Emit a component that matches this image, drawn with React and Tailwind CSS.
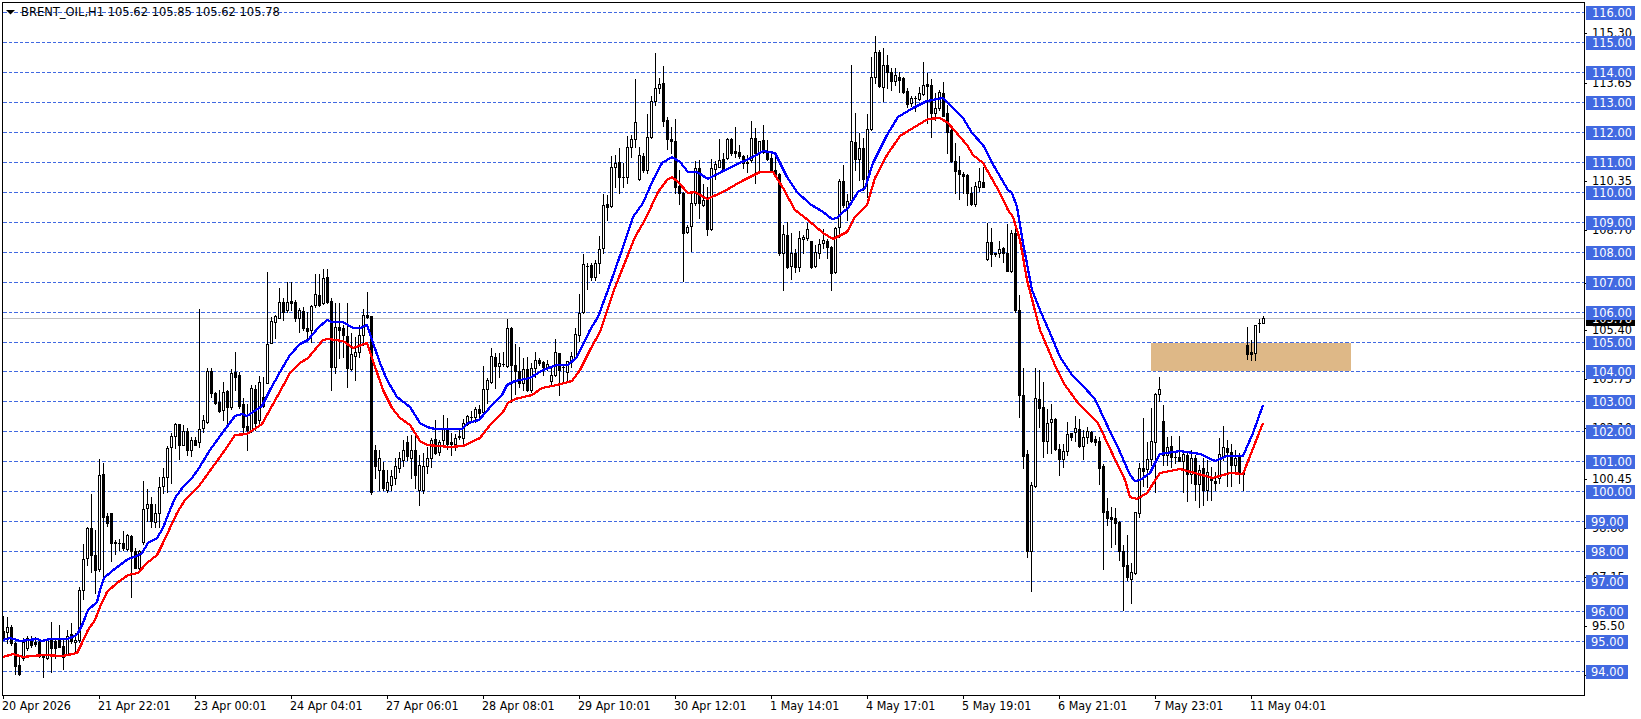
import React from "react";

// x, body top, body bottom, high, low, 1 = black candle (page pixels)
const candles = [
  [3,631,640,616,640,1],[7,627,632,617,643,0],[11,627,643,625,645,1],[15,643,666,642,674,1],[19,665,674,655,675,1],
  [23,642,658,638,660,0],[27,638,648,636,650,0],[31,640,645,636,647,1],[35,642,644,637,646,1],[39,642,656,640,657,1],
  [43,654,657,654,677,1],[47,640,658,639,659,0],[51,639,648,622,672,1],[55,641,648,638,658,1],[59,640,647,625,647,1],
  [63,646,657,638,669,1],[67,636,654,630,655,0],[71,634,641,623,643,1],[75,640,642,633,653,0],[79,590,640,587,642,0],
  [83,559,590,544,599,0],[87,528,558,527,565,0],[91,528,555,494,572,1],[95,555,570,530,593,1],[99,475,569,459,571,0],
  [103,474,517,463,578,1],[107,516,523,513,526,1],[111,513,543,513,561,1],[115,542,543,540,554,0],[119,543,543,539,550,0],
  [123,543,548,531,550,1],[127,535,549,534,550,0],[131,536,551,535,597,1],[135,551,568,548,568,1],[139,551,568,550,569,0],
  [143,509,542,481,544,0],[147,504,508,489,521,0],[151,504,521,497,527,1],[155,513,522,504,527,0],[159,487,513,477,527,0],
  [163,477,486,468,493,0],[167,448,477,446,492,0],[171,436,447,433,483,0],[175,424,436,423,448,0],[179,424,445,424,459,1],
  [183,431,445,425,445,0],[187,431,450,428,455,1],[191,440,450,437,456,0],[195,440,445,437,445,1],[199,429,442,309,447,0],
  [203,420,428,415,432,0],[207,371,422,368,423,0],[211,371,393,368,397,1],[215,393,403,392,404,1],[219,402,411,390,412,1],
  [223,392,410,382,420,0],[227,391,407,390,425,1],[231,373,407,369,409,0],[235,372,377,352,390,1],[239,375,406,372,408,1],
  [243,404,427,398,432,1],[247,426,430,404,450,1],[251,388,430,385,432,0],[255,389,423,385,430,1],[259,382,420,376,423,0],
  [263,397,406,377,407,1],[267,344,383,272,383,0],[271,321,343,317,343,0],[275,316,322,315,338,0],[279,302,318,288,318,0],
  [283,302,312,298,320,1],[287,302,310,282,312,0],[291,301,303,282,310,1],[295,302,318,300,321,1],[299,310,318,308,332,0],
  [303,311,328,307,330,1],[307,328,331,312,340,1],[311,306,330,305,342,0],[315,294,305,274,307,0],[319,295,305,274,306,1],
  [323,278,303,269,304,0],[327,277,302,269,303,1],[331,301,367,298,390,1],[335,327,367,303,373,0],[339,327,330,303,358,1],
  [343,328,335,325,357,1],[347,336,368,303,387,1],[351,354,369,333,370,0],[355,352,356,337,380,0],[359,335,352,325,357,0],
  [363,315,335,309,345,0],[367,315,317,292,318,1],[371,316,492,316,494,1],[375,450,466,445,478,1],[379,458,470,450,490,0],
  [383,470,488,462,490,1],[387,482,490,470,492,0],[391,476,485,470,490,0],[395,466,478,458,484,0],[399,458,468,452,472,0],
  [403,450,460,440,466,0],[407,442,456,436,460,1],[411,450,458,435,478,0],[415,450,475,432,488,1],[419,465,490,455,505,0],
  [423,466,490,453,493,0],[427,458,466,447,473,0],[431,440,458,438,467,0],[435,439,453,420,454,1],[439,442,452,440,455,0],
  [443,429,440,415,445,0],[447,430,444,418,449,1],[451,442,444,433,455,1],[455,438,444,434,450,0],[459,436,437,430,439,1],
  [463,423,438,419,444,0],[467,416,424,415,425,0],[471,417,417,411,420,0],[475,409,417,407,422,0],[479,409,413,405,417,1],
  [483,389,412,366,413,0],[487,380,389,378,403,0],[491,356,382,348,383,0],[495,357,366,353,388,1],[499,363,366,353,377,0],
  [503,364,364,352,366,0],[507,328,366,319,367,0],[511,328,365,327,402,1],[515,365,371,344,394,1],[519,371,383,347,387,1],
  [523,369,383,358,390,0],[527,369,390,357,391,1],[531,368,390,363,392,0],[535,360,368,352,377,0],[539,360,363,358,365,1],
  [543,362,367,361,375,1],[547,364,367,360,370,0],[551,375,381,366,385,0],[555,352,375,339,376,0],[559,353,370,353,395,1],
  [563,367,367,365,383,0],[567,361,372,361,382,0],[571,356,362,352,367,0],[575,334,357,328,358,0],[579,313,335,294,341,0],
  [583,264,312,254,313,0],[587,266,266,263,289,0],[591,265,277,263,280,1],[595,263,277,260,280,0],[599,249,263,236,273,0],
  [603,205,248,194,253,0],[607,204,207,195,220,1],[611,167,206,156,207,0],[615,163,167,155,187,0],[619,162,177,148,193,1],
  [623,177,177,163,187,0],[627,147,177,136,183,0],[631,139,147,135,157,0],[635,122,139,79,147,0],[639,155,179,147,180,0],
  [643,156,170,153,172,1],[647,137,170,114,173,0],[651,101,137,96,138,0],[655,88,101,53,105,0],[659,84,88,78,93,0],
  [663,83,121,66,126,1],[667,120,139,117,149,1],[671,139,141,127,153,1],[675,141,187,119,193,1],[679,186,193,170,204,1],
  [683,193,233,192,281,1],[687,227,232,225,233,0],[691,203,226,193,251,0],[695,168,203,161,205,0],[699,168,203,160,218,1],
  [703,200,205,184,206,0],[707,200,229,187,235,1],[711,168,229,159,230,0],[715,164,169,161,179,0],[719,160,167,139,167,0],
  [723,159,170,153,171,1],[727,139,158,138,159,0],[731,139,153,138,155,1],[735,151,153,127,157,1],[739,152,156,145,158,1],
  [743,156,163,155,168,1],[747,162,163,155,172,1],[751,138,160,121,162,0],[755,138,153,128,183,1],[759,141,152,141,172,0],
  [763,140,152,125,153,1],[767,152,159,140,160,1],[771,158,171,153,172,1],[775,170,175,152,177,1],[779,174,253,173,255,1],
  [783,234,253,225,290,0],[787,235,267,222,268,1],[791,253,266,233,279,0],[795,253,267,249,272,1],[799,238,267,231,271,0],
  [803,237,239,235,253,0],[807,229,238,223,240,0],[811,241,267,241,268,1],[815,252,266,245,267,0],[819,244,253,239,258,0],
  [823,240,243,229,248,0],[827,241,247,239,258,1],[831,247,273,246,290,1],[835,228,272,227,273,0],[839,181,227,179,237,0],
  [843,181,205,165,207,1],[847,201,208,194,220,0],[851,141,200,65,201,0],[855,142,159,113,170,1],[859,148,159,133,180,0],
  [863,148,179,138,190,1],[867,129,178,114,197,0],[871,77,129,57,130,0],[875,52,77,36,83,0],[879,52,86,50,87,1],
  [883,65,87,48,101,0],[887,65,72,55,88,1],[891,72,81,68,90,1],[895,75,81,68,85,0],[899,77,80,72,92,1],
  [903,78,92,77,93,1],[907,91,104,88,107,1],[911,98,103,96,106,0],[915,98,98,96,111,0],[919,93,99,87,100,0],
  [923,85,94,62,95,0],[927,84,86,73,123,1],[931,85,113,79,137,1],[935,108,113,93,120,0],[939,92,108,90,110,0],
  [943,93,116,82,116,1],[947,113,132,105,153,1],[951,130,161,129,162,1],[955,161,171,143,193,1],[959,170,174,156,199,1],
  [963,174,176,172,193,1],[967,175,193,174,205,1],[971,193,204,187,205,1],[975,186,204,182,206,0],[979,181,187,168,191,0],
  [983,182,187,167,187,1],[987,242,259,223,260,0],[991,242,254,228,266,1],[995,253,254,253,256,1],[999,249,253,241,257,0],
  [1003,248,253,247,262,1],[1007,253,271,224,271,1],[1011,233,271,230,272,0],[1015,233,310,222,312,1],[1019,310,395,295,417,1],
  [1023,395,456,368,468,1],[1027,454,551,450,557,1],[1031,485,551,482,591,0],[1035,398,486,368,487,0],[1039,399,408,370,427,1],
  [1043,407,441,382,457,1],[1047,423,441,409,453,0],[1051,419,422,404,453,0],[1055,419,449,418,450,1],[1059,449,459,444,475,1],
  [1063,451,459,444,467,0],[1067,434,451,422,455,0],[1071,433,437,433,440,1],[1075,428,432,416,441,0],[1079,429,446,419,447,1],
  [1083,437,446,430,459,0],[1087,431,437,427,443,0],[1091,432,441,431,442,1],[1095,439,442,436,445,1],[1099,441,468,437,484,1],
  [1103,466,512,464,569,1],[1107,511,518,498,525,1],[1111,517,519,507,547,1],[1115,518,523,508,544,1],[1119,522,551,521,560,1],
  [1123,551,566,545,610,1],[1127,565,577,535,580,1],[1131,572,579,563,603,0],[1135,512,573,512,574,0],[1139,468,513,463,517,0],
  [1143,468,471,418,486,1],[1147,459,469,442,487,0],[1151,441,459,408,465,0],[1155,394,442,393,492,0],[1159,389,394,377,401,0],
  [1163,421,455,405,465,1],[1167,447,455,437,465,0],[1171,446,457,436,467,1],[1175,457,457,453,463,0],[1179,457,461,436,461,1],
  [1183,454,461,450,492,0],[1187,455,474,453,501,1],[1191,458,474,450,483,0],[1195,458,484,455,500,1],[1199,470,484,465,507,0],
  [1203,468,490,458,505,1],[1207,472,490,460,500,0],[1211,477,480,467,500,1],[1215,481,483,472,490,1],[1219,454,478,438,483,0],
  [1223,447,456,426,460,0],[1227,448,452,440,486,1],[1231,452,465,444,486,1],[1235,458,465,450,473,0],[1239,457,472,453,483,1],
  [1243,472,474,470,490,1],[1247,345,354,327,359,1],[1251,352,354,340,360,1],[1255,325,353,325,360,0],[1259,323,323,319,332,0],
  [1263,318,323,316,323,0],
];

const blueLine = "3,640 10,638 17,640 20,641 37,639 42,641 50,639 67,639 75,636 78,633 83,623 88,610 97,602 100,590 104,578 112,571 120,565 128,559 137,556 142,553 148,543 157,538 163,528 168,515 175,498 183,487 192,478 199,468 210,450 223,432 235,416 242,414 247,416 262,406 270,390 280,372 290,355 300,344 308,340 318,328 327,320 332,322 343,322 353,328 360,328 367,325 372,340 380,363 387,380 397,397 410,407 420,423 427,427 435,429 462,429 468,423 479,420 492,405 502,395 507,385 515,381 530,378 543,370 557,365 568,365 577,357 590,330 598,317 608,290 622,250 633,217 643,203 653,180 662,163 672,157 680,162 688,172 697,172 708,179 723,171 742,162 753,157 763,151 775,153 787,177 797,192 810,204 823,212 832,219 837,218 842,213 848,208 858,192 865,188 873,163 887,135 898,117 913,108 927,101 943,98 955,110 963,118 972,133 983,145 995,168 1008,190 1012,193 1017,207 1023,243 1032,290 1040,310 1050,333 1060,357 1072,375 1082,385 1095,399 1107,425 1120,452 1130,475 1135,481 1140,480 1150,473 1155,463 1160,454 1180,451 1200,454 1215,461 1227,456 1243,456 1253,433 1263,405";

const redLine = "3,657 13,654 23,657 43,655 63,656 77,653 82,643 88,630 95,620 100,607 107,592 117,583 128,575 138,573 147,563 157,555 163,543 170,528 177,513 185,500 199,486 225,450 235,435 247,434 262,424 277,397 290,373 300,363 308,358 323,340 328,339 343,341 353,348 367,343 372,358 383,390 392,408 400,418 410,425 420,441 427,445 450,447 463,446 480,438 490,425 503,412 508,403 515,399 532,395 542,388 557,385 572,381 580,370 590,350 600,332 614,290 635,237 645,220 658,192 667,180 672,177 678,182 688,193 695,192 707,199 723,192 742,181 760,172 773,172 783,188 795,210 808,220 823,233 833,239 847,232 855,217 867,205 875,178 887,155 900,136 913,128 928,119 940,118 948,123 967,145 973,155 983,163 1000,193 1008,210 1013,217 1020,240 1027,280 1040,330 1057,370 1065,385 1078,403 1098,423 1112,453 1125,480 1130,497 1137,499 1147,493 1160,473 1180,469 1213,478 1230,473 1243,474 1263,423";

// grid level -> y, the chart rounds one pixel up from 104 down
const gridLevels = [116,115,114,113,112,111,110,109,108,107,106,105,104,103,102,101,100,99,98,97,96,95,94].map((p) => ({
  price: p,
  y: 12 + 30 * (116 - p) - (p <= 104 ? 1 : 0),
}));

const scaleTicks = [
  ["115.30",33],["113.65",83],["110.35",181],["108.70",230],["107.05",283],["105.40",330],["103.75",379],
  ["102.10",428],["100.45",479],["98.80",528],["97.15",577],["95.50",626],["93.85",675],
];

const timeLabels = [
  "20 Apr 2026","21 Apr 22:01","23 Apr 00:01","24 Apr 04:01","27 Apr 06:01","28 Apr 08:01","29 Apr 10:01",
  "30 Apr 12:01","1 May 14:01","4 May 17:01","5 May 19:01","6 May 21:01","7 May 23:01","11 May 04:01",
];

const Candle = ({ c }) => {
  const [x, top, bottom, high, low, black] = c;
  const mid = x + 0.5;
  return (
    <g>
      <line x1={mid} x2={mid} y1={high} y2={low + 1} stroke="#000" />
      {top === bottom ? (
        <line x1={x - 1} x2={x + 2} y1={top + 0.5} y2={top + 0.5} stroke="#000" />
      ) : (
        <rect x={x - 0.5} y={top + 0.5} width={2} height={bottom - top} fill={black ? "#000" : "#fff"} stroke="#000" />
      )}
    </g>
  );
};

const Chart = () => (
  <svg className="block" width={1581} height={692} viewBox="3 3 1581 692">
    <rect x={1151} y={343} width={200} height={28} fill="#deb887" />
    {gridLevels.map((g) => (
      <line key={g.price} x1={3} x2={1584} y1={g.y + 0.5} y2={g.y + 0.5} stroke="#4169e1" strokeDasharray="4 2 3 2" />
    ))}
    <line x1={3} x2={1584} y1={318.5} y2={318.5} stroke="#c0c0c0" />
    <g shapeRendering="crispEdges">
      {candles.map((c) => (
        <Candle key={c[0]} c={c} />
      ))}
    </g>
    <polyline points={redLine} fill="none" stroke="#ff0000" strokeWidth={2.3} shapeRendering="crispEdges" />
    <polyline points={blueLine} fill="none" stroke="#0000ff" strokeWidth={2.3} shapeRendering="crispEdges" />
    <polygon points="6,10 15,10 10.5,14.5" fill="#000" />
  </svg>
);

const PriceScale = () => (
  <div className="relative flex-1 text-[12.7px] leading-[14px]">
    {scaleTicks.map(([label, y]) => (
      <div key={label} className="absolute left-0 flex items-center h-[14px] text-black" style={{ top: y - 9 }}>
        <span className="w-[2px] h-px bg-black"></span>
        <span className="ml-[5px]">{label}</span>
      </div>
    ))}
    <div className="absolute left-px w-[49px] h-[14px] pl-[6px] bg-black text-white" style={{ top: 310 }}>
      105.78
    </div>
    {gridLevels.map((g) => (
      <div
        key={g.price}
        className={`absolute left-px h-[14px] bg-[#4169e1] text-white ${g.price >= 100 ? "w-[49px] pl-[6px]" : "w-[42px] pl-[5px]"}`}
        style={{ top: g.y - 8 }}
      >
        {g.price.toFixed(2)}
      </div>
    ))}
  </div>
);

const TimeScale = () => (
  <div className="flex pl-px text-[12.4px] leading-[14px] text-black">
    {timeLabels.map((t) => (
      <div key={t} className="w-[96px] shrink-0">
        <div className="w-px h-[3px] bg-black"></div>
        <div className="-ml-px whitespace-nowrap">{t}</div>
      </div>
    ))}
  </div>
);

export default function App() {
  return (
    <div className="w-[1641px] h-[719px] overflow-hidden bg-white pt-[2px] pl-[2px] font-['DejaVu_Sans_Condensed','DejaVu_Sans',sans-serif]">
      <div className="flex h-[694px]">
        <div className="relative w-[1583px] shrink-0 border border-black">
          <Chart />
          <div className="absolute left-[18px] top-[2px] text-[12.8px] leading-[14px] text-black whitespace-nowrap">
            BRENT_OIL,H1 105.62 105.85 105.62 105.78
          </div>
        </div>
        <PriceScale />
      </div>
      <TimeScale />
    </div>
  );
}
